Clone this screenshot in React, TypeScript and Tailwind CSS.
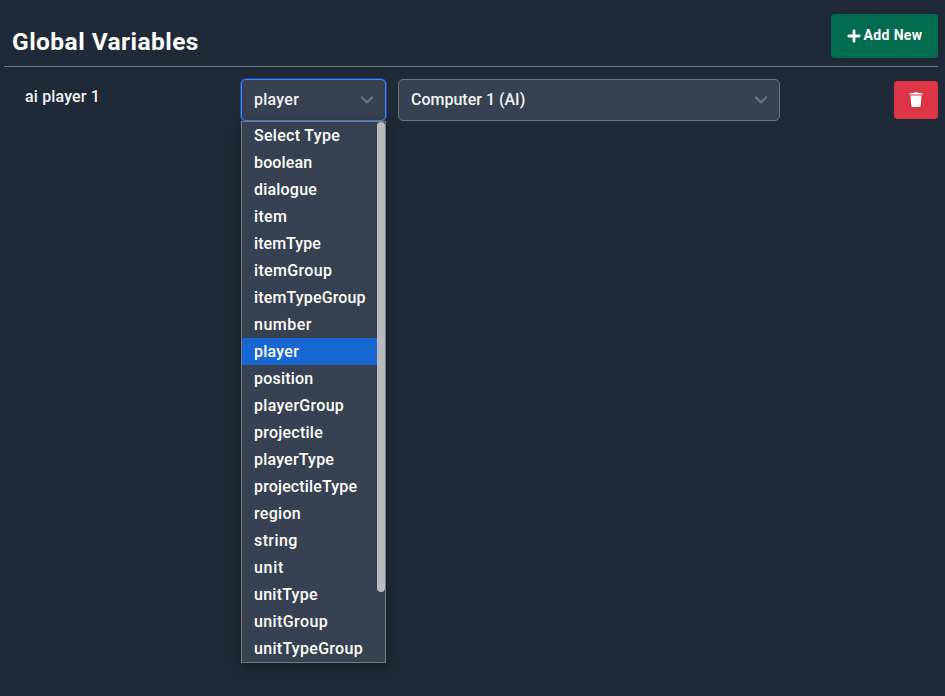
const types = [
  { name: "Select Type", tracking: "tracking-[0.3px]" },
  { name: "boolean", tracking: "tracking-[0.15px]" },
  { name: "dialogue", tracking: "tracking-[0.2px]" },
  { name: "item", tracking: "tracking-[0.3px]" },
  { name: "itemType", tracking: "tracking-[0.05px]" },
  { name: "itemGroup", tracking: "tracking-[0.35px]" },
  { name: "itemTypeGroup", tracking: "tracking-[0.15px]" },
  { name: "number", tracking: "tracking-[0.5px]" },
  { name: "player", tracking: "tracking-[0.25px]" },
  { name: "position", tracking: "tracking-[0.2px]" },
  { name: "playerGroup", tracking: "tracking-[0.3px]" },
  { name: "projectile", tracking: "tracking-[0.25px]" },
  { name: "playerType", tracking: "tracking-[0.2px]" },
  { name: "projectileType", tracking: "tracking-[0.15px]" },
  { name: "region", tracking: "tracking-[0.3px]" },
  { name: "string", tracking: "tracking-[0.4px]" },
  { name: "unit", tracking: "tracking-[0.7px]" },
  { name: "unitType", tracking: "tracking-[0.25px]" },
  { name: "unitGroup", tracking: "tracking-[0.4px]" },
  { name: "unitTypeGroup", tracking: "tracking-[0.3px]" },
];

function Chevron() {
  return (
    <svg viewBox="0 0 12 12" className="size-3 text-[#6b7280]" fill="none" stroke="currentColor" strokeWidth="2.2" strokeLinecap="round" strokeLinejoin="round">
      <path d="m1 3.5 5 5 5-5" />
    </svg>
  );
}

function TypeMenu() {
  return (
    <div className="absolute top-[42px] left-px flex h-[542px] w-[145px] border border-[#777b80] bg-[#384151] shadow-[0_3px_10px_rgba(0,0,0,0.3)]">
      <ul className="min-w-0 flex-1">
        {types.map(({ name, tracking }) => (
          <li
            key={name}
            className={`h-[27px] pl-3 text-base leading-[27px] font-medium whitespace-nowrap text-white ${tracking} ${name === "player" ? "bg-[#1967d2]" : ""}`}
          >
            {name}
          </li>
        ))}
      </ul>
      <div className="h-[470px] w-2 rounded-full bg-[#bab9be]" />
    </div>
  );
}

export default function App() {
  return (
    <main className="h-[696px] overflow-hidden bg-[#202937] pr-[7px] pl-1 font-['Roboto','Liberation_Sans',sans-serif] text-white">
      <header className="flex h-[67px] items-start justify-between border-b border-[#6b7280] pt-[14px] pl-2">
        <h1 className="pt-3 text-[24.5px] leading-8 font-bold tracking-[0.45px]">Global Variables</h1>
        <button className="flex h-11 w-[107px] items-center justify-center gap-[3px] rounded bg-[#046c4e] pb-0.5 text-sm font-bold tracking-[0.35px]">
          <svg viewBox="0 0 14 14" className="mt-0.5 size-[14px]" fill="none" stroke="currentColor" strokeWidth="2.8" strokeLinecap="round">
            <path d="M7 1.8v10.4M1.8 7h10.4" />
          </svg>
          <span>Add New</span>
        </button>
      </header>
      <div className="flex items-start pt-3">
        <div className="w-[236px] pt-[6px] pl-[21px] text-base leading-6 font-medium tracking-[0.15px] text-[#f3f4f6]">ai player 1</div>
        <div className="relative">
          <div className="ml-px flex h-[42px] w-[145px] items-center justify-between rounded-[5px] border border-[#3f83f8] bg-[#384151] px-3 font-medium tracking-[0.25px] text-[#f3f4f6] ring-1 ring-[#1c64f2]/60">
            <span>player</span>
            <Chevron />
          </div>
          <TypeMenu />
        </div>
        <div className="ml-3 flex h-[42px] w-[382px] items-center justify-between rounded-[5px] border border-[#6b7280] bg-[#384151] px-3 font-medium text-[#f3f4f6]">
          <span>Computer 1 (AI)</span>
          <Chevron />
        </div>
        <button className="mt-[2px] ml-auto flex h-[38px] w-11 items-center justify-center rounded bg-[#dc3545]" aria-label="Delete">
          <svg viewBox="0 0 14 16" className="h-4 w-[14px]" fill="currentColor">
            <path d="M4.7 1 5.2.3h3.6l.5.7h3.5q.7 0 .7.7v.8H.5v-.8Q.5 1 1.2 1zM1.5 3.5h11l-.8 10.3q-.1 1.2-1.3 1.2H3.6q-1.2 0-1.3-1.2z" />
          </svg>
        </button>
      </div>
    </main>
  );
}
